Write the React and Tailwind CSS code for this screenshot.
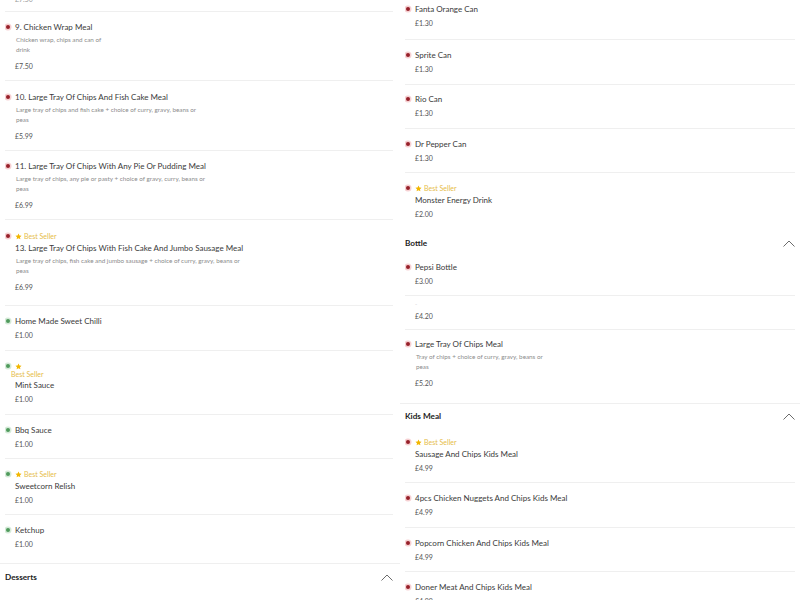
import React from "react";

const Dot = ({ green }) => (
  <span
    className={
      green
        ? "inline-block ml-[1px] w-[4px] h-[4px] rounded-full bg-[#4f9a5c] ring-[1.5px] ring-[#d5ead8] shrink-0"
        : "inline-block ml-[1px] w-[4px] h-[4px] rounded-full bg-[#96202a] ring-[1.5px] ring-[#f6d0d2] shrink-0"
    }
  />
);

const Star = () => (
  <svg width="7" height="7" viewBox="0 0 24 24" className="shrink-0">
    <path
      d="M12 1.5l3.2 6.9 7.3.8-5.5 5 1.6 7.3L12 17.8l-6.6 3.7L7 14.2l-5.5-5 7.3-.8z"
      fill="#f2b600"
    />
  </svg>
);

const Chevron = () => (
  <svg width="12" height="7" viewBox="0 0 12 7">
    <polyline points="0.5,6.5 6,1 11.5,6.5" fill="none" stroke="#6b6b6b" strokeWidth="1" />
  </svg>
);

function Item({ it }) {
  return (
    <div className={`${it.h} ${it.pt} ${it.noBorder ? "" : "border-b border-[#efefef]"} ${it.mx} overflow-hidden`}>
      {it.badge && (
        <div className="flex items-center h-[8px] leading-[8px]">
          <Dot green={it.green} />
          <span className="ml-[5px]"><Star /></span>
          <span className="ml-[2px] text-[7px] text-[#e6bd4a]">Best Seller</span>
        </div>
      )}
      {it.mint && (
        <>
          <div className="flex items-center h-[8px]">
            <Dot green={it.green} />
            <span className="ml-[5px]"><Star /></span>
          </div>
          <div className="h-[8px] leading-[8px] pl-[6px] text-[7px] text-[#e6bd4a]">Best Seller</div>
        </>
      )}
      {it.title !== undefined && (
        <div className={`flex items-center h-[10px] ${it.badge ? "mt-[3px]" : it.mint ? "mt-[2px]" : ""}`}>
          {!it.badge && !it.mint ? <Dot green={it.green} /> : <span className="w-[5px] shrink-0" />}
          <span className="ml-[5px] text-[8px] leading-[10px] text-[#3a3a3a] whitespace-nowrap">{it.title}</span>
        </div>
      )}
      {it.faint && <div className="h-[4px] leading-[4px] pl-[10px] text-[6px] text-[#d0d0d0]">-</div>}
      {it.desc && (
        <div className="mt-[3px] pl-[11px] text-[6.3px] leading-[9.5px] text-[#8c8c8c]">
          {it.desc.map((l, i) => (
            <div key={i} className="whitespace-nowrap">{l}</div>
          ))}
        </div>
      )}
      <div className={`${it.desc ? "mt-[7px]" : it.faint ? "mt-[5px]" : "mt-[4px]"} pl-[10px] h-[10px] leading-[10px] text-[7px] text-[#555]`}>
        {it.price}
      </div>
    </div>
  );
}

function Header({ title, h, pr }) {
  return (
    <div className={`${h} flex items-center justify-between pl-[5px] ${pr}`}>
      <span className="text-[8.2px] font-bold text-[#222]">{title}</span>
      <Chevron />
    </div>
  );
}

const L = "ml-[5px] mr-[7px]";
const R = "ml-[5px] mr-[5px]";

const left = [
  { h: "h-[69px]", pt: "pt-[10px]", mx: L, title: "9. Chicken Wrap Meal", desc: ["Chicken wrap, chips and can of", "drink"], price: "£7.50" },
  { h: "h-[70px]", pt: "pt-[11px]", mx: L, title: "10. Large Tray Of Chips And Fish Cake Meal", desc: ["Large tray of chips and fish cake + choice of curry, gravy, beans or", "peas"], price: "£5.99" },
  { h: "h-[69px]", pt: "pt-[10px]", mx: L, title: "11. Large Tray Of Chips With Any Pie Or Pudding Meal", desc: ["Large tray of chips, any pie or pasty + choice of gravy, curry, beans or", "peas"], price: "£6.99" },
  { h: "h-[86px]", pt: "pt-[12px]", mx: L, badge: true, title: "13. Large Tray Of Chips With Fish Cake And Jumbo Sausage Meal", desc: ["Large tray of chips, fish cake and jumbo sausage + choice of curry, gravy, beans or", "peas"], price: "£6.99" },
  { h: "h-[45px]", pt: "pt-[10px]", mx: L, green: true, title: "Home Made Sweet Chilli", price: "£1.00" },
  { h: "h-[64px]", pt: "pt-[11px]", mx: L, green: true, mint: true, title: "Mint Sauce", price: "£1.00" },
  { h: "h-[44px]", pt: "pt-[10px]", mx: L, green: true, title: "Bbq Sauce", price: "£1.00" },
  { h: "h-[56px]", pt: "pt-[11px]", mx: L, green: true, badge: true, title: "Sweetcorn Relish", price: "£1.00" },
  { h: "h-[48px]", pt: "pt-[10px]", mx: L, green: true, noBorder: true, title: "Ketchup", price: "£1.00" },
];

const right1 = [
  { h: "h-[40px]", pt: "pt-[4px]", mx: R, title: "Fanta Orange Can", price: "£1.30" },
  { h: "h-[45px]", pt: "pt-[10px]", mx: R, title: "Sprite Can", price: "£1.30" },
  { h: "h-[44px]", pt: "pt-[9px]", mx: R, title: "Rio Can", price: "£1.30" },
  { h: "h-[44px]", pt: "pt-[10px]", mx: R, title: "Dr Pepper Can", price: "£1.30" },
  { h: "h-[58px]", pt: "pt-[11px]", mx: R, badge: true, noBorder: true, title: "Monster Energy Drink", price: "£2.00" },
];

const right2 = [
  { h: "h-[41px]", pt: "pt-[7px]", mx: R, title: "Pepsi Bottle", price: "£3.00" },
  { h: "h-[34px]", pt: "pt-[6px]", mx: R, faint: true, price: "£4.20" },
  { h: "h-[73px]", pt: "pt-[9px]", mx: R, noBorder: true, title: "Large Tray Of Chips Meal", desc: ["Tray of chips + choice of curry, gravy, beans or", "peas"], price: "£5.20" },
];

const right3 = [
  { h: "h-[55px]", pt: "pt-[10px]", mx: R, badge: true, title: "Sausage And Chips Kids Meal", price: "£4.99" },
  { h: "h-[45px]", pt: "pt-[10px]", mx: R, title: "4pcs Chicken Nuggets And Chips Kids Meal", price: "£4.99" },
  { h: "h-[44px]", pt: "pt-[10px]", mx: R, title: "Popcorn Chicken And Chips Kids Meal", price: "£4.99" },
  { h: "h-[45px]", pt: "pt-[10px]", mx: R, title: "Doner Meat And Chips Kids Meal", price: "£4.99" },
];

export default function App() {
  return (
    <div className="w-[800px] h-[600px] overflow-hidden bg-white font-['Lato',sans-serif] flex">
      <div className="w-[400px] shrink-0">
        <div className={`h-[12px] border-b border-[#efefef] ${L} overflow-hidden`}>
          <div className="-mt-[6px] pl-[10px] text-[7px] leading-[10px] text-[#999]">£7.50</div>
        </div>
        {left.map((it, i) => (
          <Item key={i} it={it} />
        ))}
        <div className="h-px bg-[#efefef]" />
        <Header title="Desserts" h="h-[26px]" pr="pr-[7px]" />
        <Item it={{ h: "h-[45px]", pt: "pt-[10px]", mx: L, badge: true, title: "Chocolate Fudge Cake", price: "£3.50" }} />
      </div>
      <div className="w-[400px] shrink-0">
        {right1.map((it, i) => (
          <Item key={i} it={it} />
        ))}
        <Header title="Bottle" h="h-[24px]" pr="pr-[5px]" />
        {right2.map((it, i) => (
          <Item key={i} it={it} />
        ))}
        <div className="h-px bg-[#efefef]" />
        <Header title="Kids Meal" h="h-[24px]" pr="pr-[5px]" />
        {right3.map((it, i) => (
          <Item key={i} it={it} />
        ))}
      </div>
    </div>
  );
}
